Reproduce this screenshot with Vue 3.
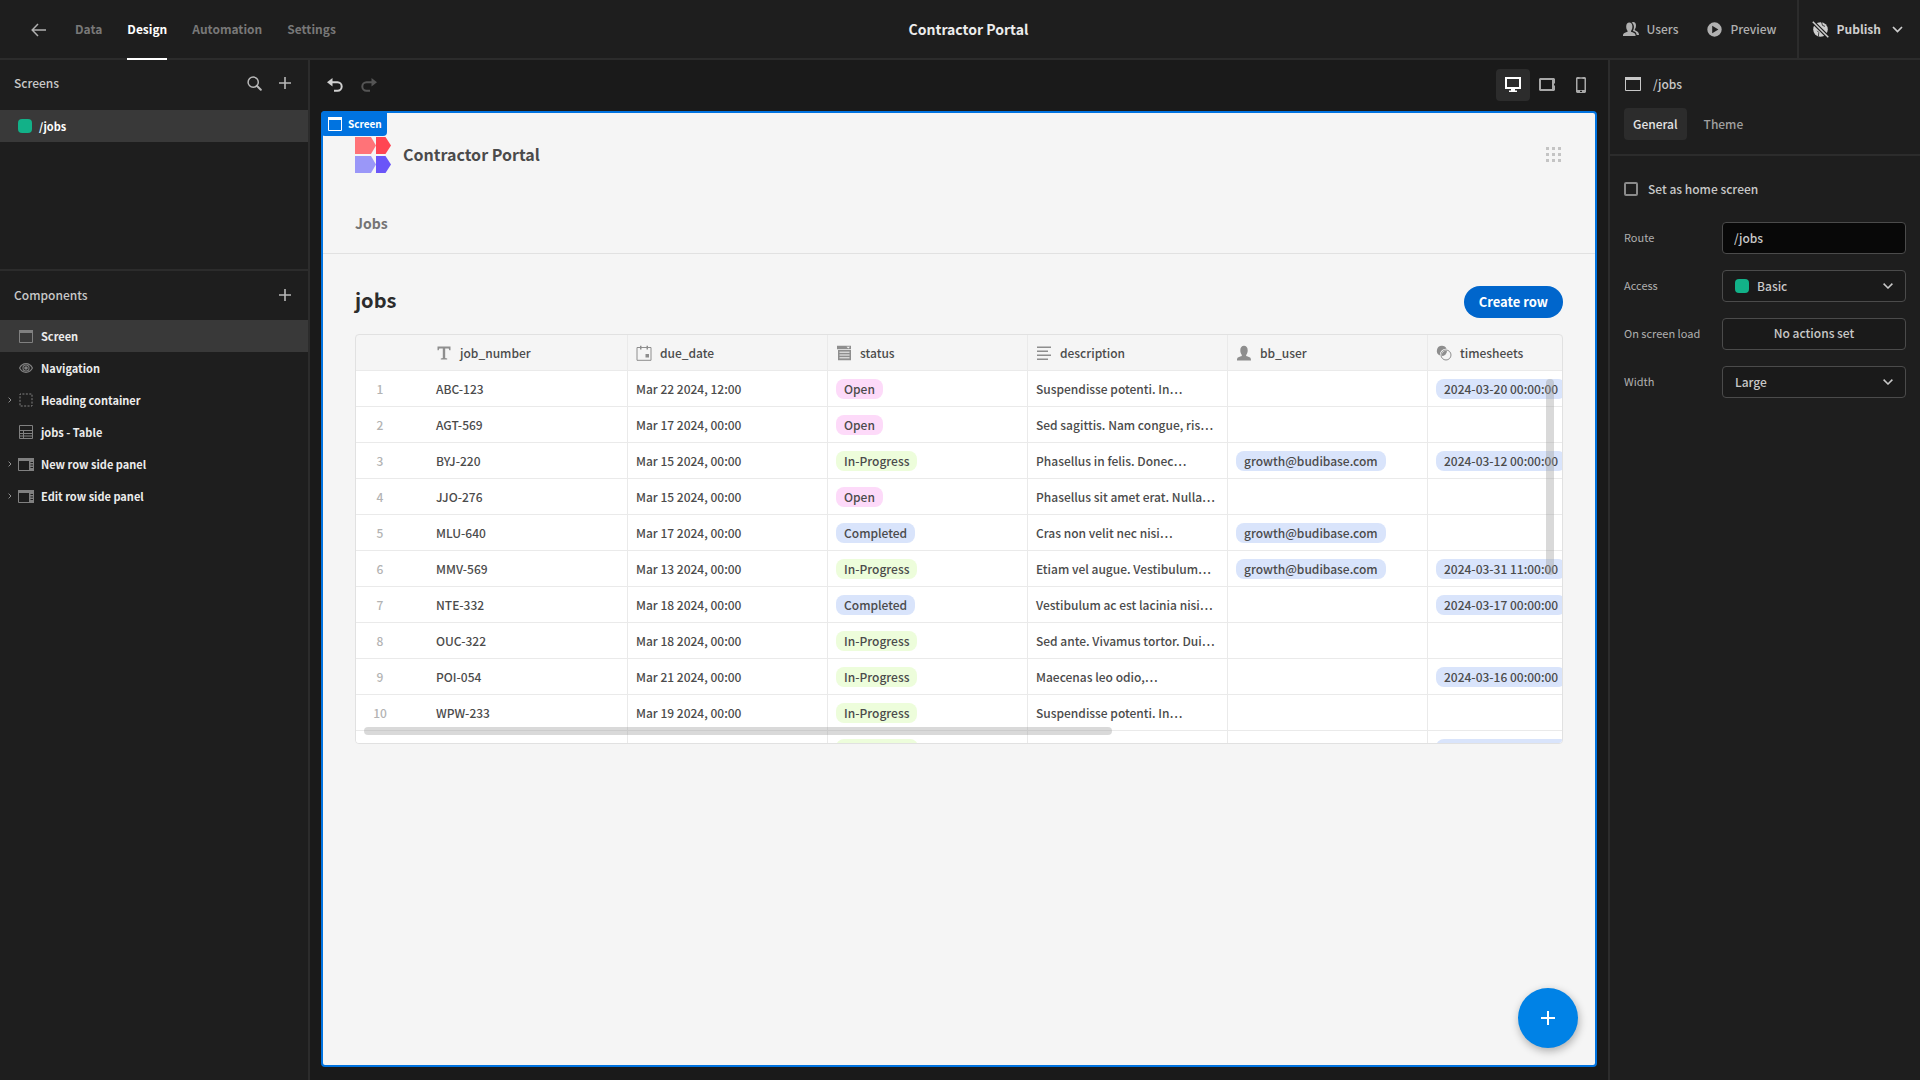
<script setup>
import { ref } from 'vue'

const tabs = ['Data', 'Design', 'Automation', 'Settings']
const activeTab = ref('Design')

const components = [
  { name: 'Screen', icon: 'screen', selected: true },
  { name: 'Navigation', icon: 'eye' },
  { name: 'Heading container', icon: 'container', expandable: true },
  { name: 'jobs - Table', icon: 'table' },
  { name: 'New row side panel', icon: 'panel', expandable: true },
  { name: 'Edit row side panel', icon: 'panel', expandable: true },
]

const columns = [
  { name: 'job_number', icon: 'text' },
  { name: 'due_date', icon: 'calendar' },
  { name: 'status', icon: 'options' },
  { name: 'description', icon: 'lines' },
  { name: 'bb_user', icon: 'user' },
  { name: 'timesheets', icon: 'link' },
]

const email = 'growth@budibase.com'
const rows = [
  ['ABC-123', 'Mar 22 2024, 12:00', 'Open', 'Suspendisse potenti. In…', '', '2024-03-20 00:00:00'],
  ['AGT-569', 'Mar 17 2024, 00:00', 'Open', 'Sed sagittis. Nam congue, ris…', '', ''],
  ['BYJ-220', 'Mar 15 2024, 00:00', 'In-Progress', 'Phasellus in felis. Donec…', email, '2024-03-12 00:00:00'],
  ['JJO-276', 'Mar 15 2024, 00:00', 'Open', 'Phasellus sit amet erat. Nulla…', '', ''],
  ['MLU-640', 'Mar 17 2024, 00:00', 'Completed', 'Cras non velit nec nisi…', email, ''],
  ['MMV-569', 'Mar 13 2024, 00:00', 'In-Progress', 'Etiam vel augue. Vestibulum…', email, '2024-03-31 11:00:00'],
  ['NTE-332', 'Mar 18 2024, 00:00', 'Completed', 'Vestibulum ac est lacinia nisi…', '', '2024-03-17 00:00:00'],
  ['OUC-322', 'Mar 18 2024, 00:00', 'In-Progress', 'Sed ante. Vivamus tortor. Dui…', '', ''],
  ['POI-054', 'Mar 21 2024, 00:00', 'In-Progress', 'Maecenas leo odio,…', '', '2024-03-16 00:00:00'],
  ['WPW-233', 'Mar 19 2024, 00:00', 'In-Progress', 'Suspendisse potenti. In…', '', ''],
]

const pillColor = { Open: 'pink', 'In-Progress': 'green', Completed: 'blue' }
const route = ref('/jobs')
const isHome = ref(false)
</script>

<template>
  <div class="app">
    <header class="topbar">
      <nav class="tabs">
        <a href="#" class="back" aria-label="Back">
          <svg width="16" height="14" viewBox="0 0 16 14"><path d="M15 7H1.5M7 1L1.2 7L7 13" fill="none" stroke="currentColor" stroke-width="1.5" /></svg>
        </a>
        <a v-for="t in tabs" :key="t" href="#" class="tab" :class="{ active: t === activeTab }" @click.prevent="activeTab = t">{{ t }}</a>
      </nav>
      <h1 class="app-title">Contractor Portal</h1>
      <div class="actions">
        <button class="action">
          <svg width="16" height="14" viewBox="0 0 16 14" fill="currentColor"><path d="M0 14c0-2.600 1-3 4-4 .8-.3.800-.9.300-1.600C3.500 7.500 3.200 6 3.200 4.500 3.200 2 4.500.6 6.300.6s3.100 1.400 3.100 3.900c0 1.500-.3 3-1.100 3.900-.5.7-.5 1.300.300 1.600 3 1 4 1.400 4 4z" /><path d="M8.600.7C9.100.2 9.700 0 10.300 0c1.600 0 2.700 1.300 2.700 3.500 0 1.400-.3 2.600-1 3.500-.4.6-.4 1 .3 1.400C14.800 9.600 16 10.300 16 13h-2.300c-.2-2.500-1.600-3.300-3.900-4 .9-1.300 1.200-3 1.100-4.500C10.800 2.700 10 1.300 8.600.7z" /></svg>
          <span>Users</span>
        </button>
        <button class="action preview">
          <svg width="15" height="15" viewBox="0 0 15 15"><path fill="currentColor" fill-rule="evenodd" d="M7.500.3a7.200 7.200 0 1 0 0 14.400a7.200 7.200 0 0 0 0-14.400zM5.200 3.700v7.600l6.200-3.800z" /></svg>
          <span>Preview</span>
        </button>
        <button class="action publish">
          <svg width="17" height="17" viewBox="0 0 17 17"><circle cx="8.500" cy="8.500" r="7.300" fill="currentColor" /><path d="M9.500 1l1 3.400 2.500 1M5.200 9.800l1.600 1.700-.4 4" stroke="#1e1e1e" stroke-width=".8" fill="none" /><path d="M0 0L17 17" stroke="#1e1e1e" stroke-width="3.800" /><path d="M.8.800L16.300 16.300" stroke="currentColor" stroke-width="1.500" /></svg>
          <span>Publish</span>
          <svg width="11" height="7" viewBox="0 0 11 7"><path d="M1 1l4.500 4.500L10 1" fill="none" stroke="currentColor" stroke-width="1.700" /></svg>
        </button>
      </div>
    </header>

    <div class="workspace">
      <aside class="left">
        <section class="screens">
          <div class="panel-head">
            <h2>Screens</h2>
            <button class="icon-btn" aria-label="Search screens">
              <svg width="15" height="15" viewBox="0 0 15 15"><circle cx="6.200" cy="6.200" r="5.100" fill="none" stroke="currentColor" stroke-width="1.500" /><path d="M9.800 9.800l4 4" stroke="currentColor" stroke-width="2" stroke-linecap="round" /></svg>
            </button>
            <button class="icon-btn" aria-label="Add screen">
              <svg width="12" height="12" viewBox="0 0 12 12"><path d="M6 0v12M0 6h12" stroke="currentColor" stroke-width="1.600" /></svg>
            </button>
          </div>
          <a href="#" class="screen-row"><i class="role"></i>/jobs</a>
        </section>
        <section>
          <div class="panel-head">
            <h2>Components</h2>
            <button class="icon-btn" aria-label="Add component">
              <svg width="12" height="12" viewBox="0 0 12 12"><path d="M6 0v12M0 6h12" stroke="currentColor" stroke-width="1.600" /></svg>
            </button>
          </div>
          <ul class="tree">
            <li v-for="c in components" :key="c.name" :class="{ selected: c.selected }">
              <span class="caret"><svg v-if="c.expandable" width="4" height="6" viewBox="0 0 4 6"><path d="M.6.600L3 3L.6 5.400" fill="none" stroke="currentColor" stroke-width="1" /></svg></span>
              <span class="node-icon">
                <svg v-if="c.icon === 'screen'" width="14" height="13" viewBox="0 0 14 13"><path d="M.5.500h13v12H.5z" fill="none" stroke="currentColor" /><path d="M0 0h14v3H0z" fill="currentColor" /></svg>
                <svg v-else-if="c.icon === 'eye'" width="14" height="10" viewBox="0 0 14 10"><path d="M.6 5C2 2.300 4.300.7 7 .7S12 2.300 13.400 5C12 7.700 9.700 9.300 7 9.300S2 7.700.6 5z" fill="none" stroke="currentColor" stroke-width="1.200" /><path fill="currentColor" fill-rule="evenodd" d="M7 1.400a3.600 3.600 0 1 0 0 7.200a3.600 3.600 0 0 0 0-7.200zM7 2.500a2.500 2.500 0 1 1 0 5a2.500 2.500 0 0 1 0-5z" /><circle cx="7" cy="5" r="1.800" fill="currentColor" /></svg>
                <svg v-else-if="c.icon === 'container'" width="14" height="14" viewBox="0 0 14 14"><rect x="1" y="1" width="12" height="12" fill="none" stroke="currentColor" stroke-dasharray="2 1.430" stroke-dashoffset="1" /></svg>
                <svg v-else-if="c.icon === 'table'" width="14" height="14" viewBox="0 0 14 14"><path d="M.5.500h13v13H.5zM0 5.500h14M0 8.500h14M0 11h14M4.500 5.500v8" fill="none" stroke="currentColor" /></svg>
                <svg v-else width="16" height="13" viewBox="0 0 16 13"><path d="M.5.500h15v12H.5z" fill="none" stroke="currentColor" /><path d="M0 0h16v3H0zM11 2h5v11h-5z" fill="currentColor" /><path d="M12.500 4.500h2.500M12.500 7h2.500M12.500 9.500h2.500" stroke="#1e1e1e" /></svg>
              </span>
              <span>{{ c.name }}</span>
            </li>
          </ul>
        </section>
      </aside>

      <main class="center">
        <div class="toolbar">
          <button class="undo" aria-label="Undo">
            <svg width="16" height="14" viewBox="0 0 16 14"><path d="M0 4.300L5.500 0v8.600z" fill="currentColor" /><path d="M4 4.300h6.500a4.200 4.200 0 0 1 0 8.400H7" fill="none" stroke="currentColor" stroke-width="2" /></svg>
          </button>
          <button class="undo redo" aria-label="Redo" disabled>
            <svg width="16" height="14" viewBox="0 0 16 14"><path d="M16 4.300L10.500 0v8.600z" fill="currentColor" /><path d="M12 4.300H5.500a4.200 4.200 0 0 0 0 8.400H9" fill="none" stroke="currentColor" stroke-width="2" /></svg>
          </button>
          <div class="devices">
            <button class="active" aria-label="Desktop">
              <svg width="16" height="16" viewBox="0 0 16 16"><path d="M1 1h14v10H1z" fill="none" stroke="currentColor" stroke-width="2" /><path d="M6 11h4v2.500h2V15H4v-1.500h2z" fill="currentColor" /></svg>
            </button>
            <button aria-label="Tablet">
              <svg width="16" height="13" viewBox="0 0 16 13"><path fill="currentColor" fill-rule="evenodd" d="M1 0h14l1 1v4.500h-1v2h1V12l-1 1H1l-1-1V1zM2 2v9h11V2z" /></svg>
            </button>
            <button aria-label="Phone">
              <svg width="10" height="16" viewBox="0 0 10 16"><path fill="currentColor" fill-rule="evenodd" d="M1 0h8l1 1v14l-1 1H1l-1-1V1zM1.500 2v11h7V2zM4 13.800v1.200h2v-1.200zM3.500.8v.5h3V.8z" /></svg>
            </button>
          </div>
        </div>

        <div class="frame">
          <span class="badge">
            <svg width="14" height="14" viewBox="0 0 14 14"><path d="M.5.500h13v13H.5z" fill="none" stroke="currentColor" /><path d="M0 0h14v3H0z" fill="currentColor" /></svg>
            Screen
          </span>
          <div class="app-nav">
            <div class="brand">
              <svg width="36" height="36" viewBox="0 0 36 36"><path d="M0 0h16l5 8.500L16 17H0z" fill="#ff7378" /><path d="M21 0h9.500L36 8.500L30.500 17H21z" fill="#ff4553" /><path d="M0 19h16l5 8.500L16 36H0z" fill="#9a97f8" /><path d="M21 19h9.500L36 27.500L30.500 36H21z" fill="#6a55f8" /></svg>
              <span>Contractor Portal</span>
              <button class="apps" aria-label="Apps">
                <svg width="15" height="15" viewBox="0 0 15 15" fill="currentColor"><path d="M0 0h3v3H0zM6 0h3v3H6zM12 0h3v3h-3zM0 6h3v3H0zM6 6h3v3H6zM12 6h3v3h-3zM0 12h3v3H0zM6 12h3v3H6zM12 12h3v3h-3z" /></svg>
              </button>
            </div>
            <a href="#" class="nav-link">Jobs</a>
          </div>
          <div class="content">
            <div class="heading">
              <h2>jobs</h2>
              <button class="create">Create row</button>
            </div>
            <div class="grid">
              <table>
                <colgroup><col class="num-col"><col v-for="c in columns" :key="c.name" class="data-col"></colgroup>
                <thead>
                  <tr>
                    <th class="num"></th>
                    <th v-for="c in columns" :key="c.name">
                      <div class="th">
                        <svg width="16" height="16" viewBox="0 0 16 16" fill="currentColor">
                          <path v-if="c.icon === 'text'" d="M1.500 1.500h13v3.800h-1.200l-.6-1.900H9.200v9.600l2 .5v1H4.800v-1l2-.5V3.400H3.300l-.6 1.900H1.500z" />
                          <template v-else-if="c.icon === 'calendar'"><path d="M1 2.500h14v12.800H1z" fill="none" stroke="currentColor" stroke-width="1" /><path d="M4 .8h1.500v3.700H4zM10.500.8H12v3.700h-1.500zM9.500 9h3.500v3.500H9.500z" /></template>
                          <template v-else-if="c.icon === 'options'"><path d="M1 .8h14v3.400H1zM2 5h13v10.200H2z" /><path d="M3.500 7.200h10M3.500 10h10M3.500 12.800h10" stroke="#f5f5f5" stroke-width="1" /><path d="M10.500 1.800h3.500l-1.750 1.600z" fill="#f5f5f5" /></template>
                          <path v-else-if="c.icon === 'lines'" d="M1 1.500h14V3H1zM1 5.500h11V7H1zM1 9.500h14V11H1zM1 13.500h11V15H1z" />
                          <path v-else-if="c.icon === 'user'" d="M1 15.500c0-3 1-3.400 4.200-4.300.9-.3.800-1 .3-1.800C4.700 8.400 4.300 6.800 4.300 5.200 4.300 2.500 5.800.8 8 .8s3.700 1.700 3.700 4.400c0 1.600-.4 3.200-1.200 4.200-.5.8-.6 1.500.3 1.800 3.200.9 4.200 1.300 4.200 4.300z" />
                          <template v-else><path d="M6 .8a5 5 0 0 1 4.600 3A6 6 0 0 0 3.900 10.400 5 5 0 0 1 6 .8z" /><circle cx="10" cy="10" r="5" fill="none" stroke="currentColor" stroke-width="1" /><path d="M11 5.800A5.200 5.200 0 0 1 5.800 11 4.600 4.600 0 0 1 11 5.800z" /></template>
                        </svg>
                        {{ c.name }}
                      </div>
                    </th>
                  </tr>
                </thead>
                <tbody>
                  <tr v-for="(r, i) in rows" :key="i">
                    <td class="num">{{ i + 1 }}</td>
                    <td>{{ r[0] }}</td>
                    <td>{{ r[1] }}</td>
                    <td><span class="pill" :class="pillColor[r[2]]">{{ r[2] }}</span></td>
                    <td>{{ r[3] }}</td>
                    <td><span v-if="r[4]" class="pill blue">{{ r[4] }}</span></td>
                    <td><span v-if="r[5]" class="pill blue">{{ r[5] }}</span></td>
                  </tr>
                  <tr class="loading">
                    <td class="num"></td>
                    <td></td>
                    <td></td>
                    <td><span class="pill green"></span></td>
                    <td></td>
                    <td></td>
                    <td><span class="pill blue wide"></span></td>
                  </tr>
                </tbody>
              </table>
              <i class="bar horizontal"></i>
              <i class="bar vertical"></i>
            </div>
          </div>
          <button class="fab" aria-label="Add">
            <svg width="14" height="14" viewBox="0 0 14 14"><path d="M7 0v14M0 7h14" stroke="currentColor" stroke-width="2" /></svg>
          </button>
        </div>
      </main>

      <aside class="right">
        <div class="right-head">
          <div class="right-title">
            <svg width="16" height="14" viewBox="0 0 16 14"><path d="M.5.500h15v13H.5z" fill="none" stroke="currentColor" /><path d="M0 0h16v3H0z" fill="currentColor" /></svg>
            <span>/jobs</span>
          </div>
          <div class="segments">
            <button class="active">General</button>
            <button>Theme</button>
          </div>
        </div>
        <form class="settings" @submit.prevent>
          <label class="check"><input v-model="isHome" type="checkbox">Set as home screen</label>
          <div class="field">
            <label for="route">Route</label>
            <input id="route" v-model="route" type="text">
          </div>
          <div class="field">
            <label for="access">Access</label>
            <div class="select">
              <i class="role"></i>
              <select id="access"><option>Basic</option></select>
              <svg width="10" height="6" viewBox="0 0 10 6"><path d="M.6.600L5 5L9.400.6" fill="none" stroke="currentColor" stroke-width="1.500" /></svg>
            </div>
          </div>
          <div class="field">
            <label for="load">On screen load</label>
            <button id="load" type="button">No actions set</button>
          </div>
          <div class="field">
            <label for="width">Width</label>
            <div class="select">
              <select id="width"><option>Large</option></select>
              <svg width="10" height="6" viewBox="0 0 10 6"><path d="M.6.600L5 5L9.400.6" fill="none" stroke="currentColor" stroke-width="1.500" /></svg>
            </div>
          </div>
        </form>
      </aside>
    </div>
  </div>
</template>

<style>
body {
  background: #1e1e1e;
}
</style>

<style scoped>
.app {
  display: flex;
  flex-direction: column;
  min-height: 100vh;
  font-family: "Noto Sans CJK KR", "Noto Sans", sans-serif;
  font-size: 12px;
  font-weight: 500;
  line-height: 20px;
  color: #c8c8c8;
  background: #1e1e1e;
}
.app * {
  box-sizing: border-box;
}
svg {
  display: block;
  flex: none;
}
button,
input,
select {
  margin: 0;
  padding: 0;
  border: 0;
  background: none;
  color: inherit;
  font: inherit;
}
a {
  color: inherit;
  text-decoration: none;
}
h1,
h2 {
  margin: 0;
}

/* Top bar */
.topbar {
  display: grid;
  grid-template-columns: 1fr auto 1fr;
  height: 60px;
  padding-left: 17px;
  border-bottom: 2px solid #2c2c2c;
}
.tabs {
  display: flex;
  gap: 25px;
  margin-bottom: -2px;
  padding-left: 14px;
}
.back {
  display: flex;
  align-items: center;
  margin-right: 3px;
  color: #b0b0b0;
}
.tab {
  padding-top: 19px;
  border-bottom: 2px solid transparent;
  font-weight: 700;
  color: #787878;
}
.tab.active {
  border-color: #fff;
  color: #fff;
}
.app-title {
  align-self: center;
  font-size: 14px;
  font-weight: 700;
  color: #ececec;
}
.actions {
  display: flex;
  justify-content: flex-end;
}
.action {
  display: flex;
  align-items: center;
  gap: 8px;
  margin-right: 29px;
  color: #b0b0b0;
}
.action.preview {
  margin-right: 20px;
}
.action.publish {
  margin: 0;
  padding: 0 17px 0 13px;
  border-left: 2px solid #2c2c2c;
  font-weight: 700;
  color: #cecece;
}
.publish svg:last-child {
  margin-left: 3px;
}

/* Shell */
.workspace {
  flex: 1;
  display: grid;
  grid-template-columns: 310px minmax(0, 1fr) 312px;
}
.left {
  border-right: 2px solid #2c2c2c;
}
.screens {
  height: 211px;
  border-bottom: 2px solid #2c2c2c;
}
.panel-head {
  display: flex;
  align-items: center;
  gap: 17px;
  height: 49px;
  padding: 0 17px 2px 14px;
}
.screens .panel-head {
  height: 50px;
  padding-bottom: 4px;
}
.panel-head h2 {
  flex: 1;
  font-size: 12px;
  font-weight: 500;
}
.icon-btn {
  color: #b8b8b8;
}
.screen-row {
  display: flex;
  align-items: center;
  gap: 7px;
  height: 32px;
  padding-left: 18px;
  background: #393939;
  color: #fff;
  font-size: 11px;
  font-weight: 700;
}
.role {
  width: 14px;
  height: 14px;
  border-radius: 4px;
  background: #12b188;
}
.tree {
  margin: 0;
  padding: 0;
  list-style: none;
}
.tree li {
  display: flex;
  align-items: center;
  height: 32px;
  font-size: 11px;
  font-weight: 700;
  color: #ececec;
}
.tree li.selected {
  background: #393939;
}
.caret {
  width: 17px;
  padding-left: 8px;
  color: #909090;
}
.node-icon {
  display: flex;
  justify-content: center;
  width: 18px;
  margin-right: 6px;
  color: #808080;
}

/* Canvas */
.center {
  display: flex;
  flex-direction: column;
  padding: 0 11px 13px;
  background: #1a1a1a;
}
.toolbar {
  display: flex;
  align-items: center;
  height: 51px;
  margin-right: -1px;
  padding: 0 0 2px 6px;
}
.undo {
  margin-right: 18px;
  color: #d0d0d0;
}
.redo {
  color: #555;
}
.devices {
  display: flex;
  margin-left: auto;
}
.devices button {
  display: flex;
  align-items: center;
  justify-content: center;
  width: 34px;
  height: 32px;
  border-radius: 4px;
  color: #a8a8a8;
}
.devices .active {
  background: #2c2c2c;
  color: #fff;
}
.frame {
  position: relative;
  flex: 1;
  border: 2px solid #0073e0;
  border-radius: 4px;
  background: #f5f5f5;
  color: #4b4b4b;
}
.badge {
  position: absolute;
  top: -2px;
  left: -2px;
  display: flex;
  align-items: center;
  gap: 6px;
  height: 25px;
  padding: 0 5px 0 7px;
  border-radius: 4px 0 4px 4px;
  background: #0073e0;
  color: #fff;
  font-size: 10px;
  font-weight: 700;
}
.app-nav {
  padding: 24px 32px 18px;
  border-bottom: 1px solid #e1e1e1;
}
.brand {
  display: flex;
  align-items: center;
  gap: 12px;
  font-size: 16px;
  font-weight: 700;
}
.brand span,
.apps {
  padding-bottom: 2px;
}
.apps {
  margin-left: auto;
  margin-right: 2px;
  color: #c4c4c4;
}
.nav-link {
  display: block;
  margin-top: 38px;
  line-height: 24px;
  font-size: 14px;
  font-weight: 700;
  color: #747474;
}
.content {
  padding: 32px;
}
.heading {
  display: flex;
  align-items: center;
  justify-content: space-between;
  margin-bottom: 16px;
}
.heading h2 {
  padding-bottom: 4px;
  font-size: 20px;
  line-height: 28px;
  font-weight: 700;
  color: #2c2c2c;
}
.create {
  height: 32px;
  padding: 0 15px;
  border-radius: 16px;
  background: #0066cc;
  color: #fff;
  font-size: 13px;
  font-weight: 700;
}
.grid {
  position: relative;
  height: 410px;
  overflow: hidden;
  border: 1px solid #e1e1e1;
  border-radius: 4px;
}
table {
  width: 1272px;
  table-layout: fixed;
  border-collapse: separate;
  border-spacing: 0;
}
.num-col {
  width: 72px;
}
.data-col {
  width: 200px;
}
th,
td {
  height: 36px;
  padding: 0 8px;
  border-right: 1px solid #eaeaea;
  border-bottom: 1px solid #eaeaea;
  font-weight: 500;
  white-space: nowrap;
  text-align: left;
}
td {
  background: #fff;
}
.th {
  display: flex;
  align-items: center;
  gap: 8px;
}
.th svg {
  color: #8e8e8e;
}
th.num,
td.num {
  border-right: 0;
  padding-right: 32px;
  text-align: center;
  color: #b3b3b3;
}
.pill {
  display: block;
  width: max-content;
  height: 20px;
  padding: 0 8px;
  border-radius: 8px;
}
.loading .pill {
  width: 82px;
}
.loading .wide {
  width: 132px;
}
.pink {
  background: #fddaf9;
}
.green {
  background: #edfddb;
}
.blue {
  background: #d9e4fb;
}
.bar {
  position: absolute;
  border-radius: 4px;
  background: rgba(160, 160, 160, 0.4);
}
.horizontal {
  left: 8px;
  bottom: 8px;
  width: 62%;
  height: 8px;
}
.vertical {
  top: 44px;
  right: 8px;
  width: 8px;
  height: 196px;
}
.fab {
  position: absolute;
  right: 17px;
  bottom: 17px;
  display: flex;
  align-items: center;
  justify-content: center;
  width: 60px;
  height: 60px;
  border-radius: 50%;
  background: #0082e6;
  color: #fff;
  box-shadow: 1px 3px 8px rgba(0, 0, 0, 0.3);
}

/* Right panel */
.right {
  border-left: 2px solid #2c2c2c;
}
.right-head {
  height: 96px;
  padding: 14px;
  border-bottom: 2px solid #2c2c2c;
}
.right-title {
  display: flex;
  align-items: center;
  gap: 12px;
  padding-left: 1px;
}
.segments {
  display: flex;
  gap: 8px;
  margin-top: 14px;
}
.segments button {
  height: 32px;
  padding: 0 9px;
  border-radius: 4px;
  color: #a0a0a0;
}
.segments .active {
  background: #2c2c2c;
  color: #e4e4e4;
}
.settings {
  padding: 23px 14px;
}
.check {
  display: flex;
  align-items: center;
  gap: 10px;
  margin-bottom: 23px;
}
.check input {
  appearance: none;
  width: 14px;
  height: 14px;
  border: 2px solid #8a8a8a;
  border-radius: 2px;
}
.field {
  display: grid;
  grid-template-columns: 98px 1fr;
  align-items: center;
  margin-bottom: 16px;
}
.field label {
  padding-bottom: 2px;
  font-size: 11px;
  font-weight: 400;
  color: #b0b0b0;
}
.field > input,
.field > button,
.select {
  height: 32px;
  border: 1px solid #4b4b4b;
  border-radius: 4px;
  background: #1a1a1a;
}
.field > input {
  min-width: 0;
  padding: 0 11px 2px;
  background: #080808;
}
.field > button {
  padding-bottom: 2px;
}
.select {
  display: flex;
  align-items: center;
  padding: 0 12px;
}
.select select {
  flex: 1;
  appearance: none;
  height: 30px;
}
.select .role {
  margin-right: 8px;
}
</style>
